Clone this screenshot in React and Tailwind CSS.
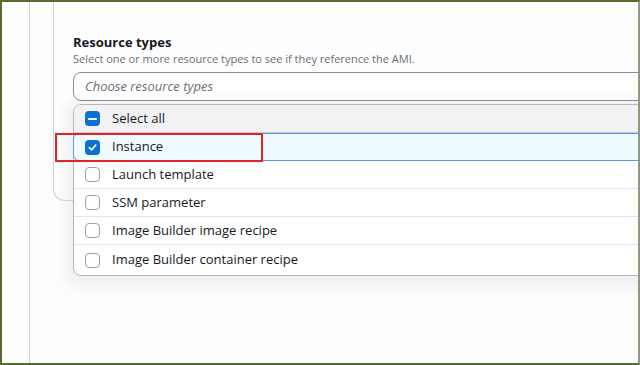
const options = [
  { label: 'Select all', state: 'some', kind: 'all' },
  { label: 'Instance', state: 'on', kind: 'hl' },
  { label: 'Launch template', state: 'off' },
  { label: 'SSM parameter', state: 'off' },
  { label: 'Image Builder image recipe', state: 'off' },
  { label: 'Image Builder container recipe', state: 'off', kind: 'last' },
];

function Box({ state }) {
  if (state === 'off') {
    return <span className="block w-[15px] h-[15px] rounded-[4px] border-[1.5px] border-[#9ba0a6] bg-white shrink-0" />;
  }
  return (
    <span className="flex items-center justify-center w-[15px] h-[15px] rounded-[4px] bg-[#0972d3] shrink-0">
      {state === 'some' ? (
        <span className="block w-[9px] h-[2px] bg-white rounded-sm" />
      ) : (
        <svg width="11" height="11" viewBox="0 0 12 12" fill="none">
          <path d="M2.5 6.2 L5 8.6 L9.5 3.4" stroke="white" strokeWidth="1.8" strokeLinecap="round" strokeLinejoin="round" />
        </svg>
      )}
    </span>
  );
}

export default function App() {
  return (
    <div
      className="relative w-[640px] h-[365px] overflow-hidden bg-[#fdfdfd] border-t-2 border-l-2 border-b-2 border-[#566d2e] border-r-2 border-r-[#8e9a83]"
      style={{ fontFamily: '"Open Sans", "Noto Sans", sans-serif' }}
    >
      <div className="flex h-full">
        {/* Linke Leiste */}
        <div className="w-[28px] h-full border-r border-[#d3d4d8] shrink-0" />

        <div className="ml-[23px] flex-1">
          {/* Karte */}
          <div className="h-[199px] w-[700px] border-l border-b border-[#d3d4d8] rounded-bl-[12px] pl-[19px] pt-[32px]">
            <div className="text-[13px] leading-[16px] font-bold text-[#16191f]">Resource types</div>
            <div className="mt-[2px] text-[11px] leading-[14px] text-[#687078]">
              Select one or more resource types to see if they reference the AMI.
            </div>

            <div className="relative mt-[6px]">
              <div className="h-[29px] w-[620px] rounded-[8px] border border-[#8c8c94] bg-white flex items-center pl-[11px]">
                <span className="text-[13px] italic text-[#687078]">Choose resource types</span>
              </div>

              {/* Dropdown */}
              <div className="absolute left-0 top-[32px] w-[620px] bg-white border border-[#b4b8be] rounded-[8px] shadow-[0_4px_14px_8px_rgba(0,7,22,0.05)]">
                {options.map((o) => (
                  <div
                    key={o.label}
                    className={
                      o.kind === 'all'
                        ? 'flex items-center gap-[12px] pl-[11px] h-[28px] bg-[#f2f2f4] border-b border-[#c6c9ce] rounded-t-[7px]'
                        : o.kind === 'hl'
                        ? 'flex items-center gap-[12px] pl-[11px] h-[28px] bg-[#f0fbff] border border-[#5a9ce2] -mx-px rounded-[6px]'
                        : o.kind === 'last'
                        ? 'flex items-center gap-[12px] pl-[11px] h-[30px]'
                        : 'flex items-center gap-[12px] pl-[11px] h-[28px] border-b border-[#e4e5e8]'
                    }
                  >
                    <Box state={o.state} />
                    <span className="text-[13px] text-[#16191f]">{o.label}</span>
                  </div>
                ))}
              </div>
            </div>
          </div>
        </div>
      </div>

      {/* Markierung */}
      <div className="absolute left-[53px] top-[131px] w-[208px] h-[29px] border-2 border-[#e2232a]" />
    </div>
  );
}
